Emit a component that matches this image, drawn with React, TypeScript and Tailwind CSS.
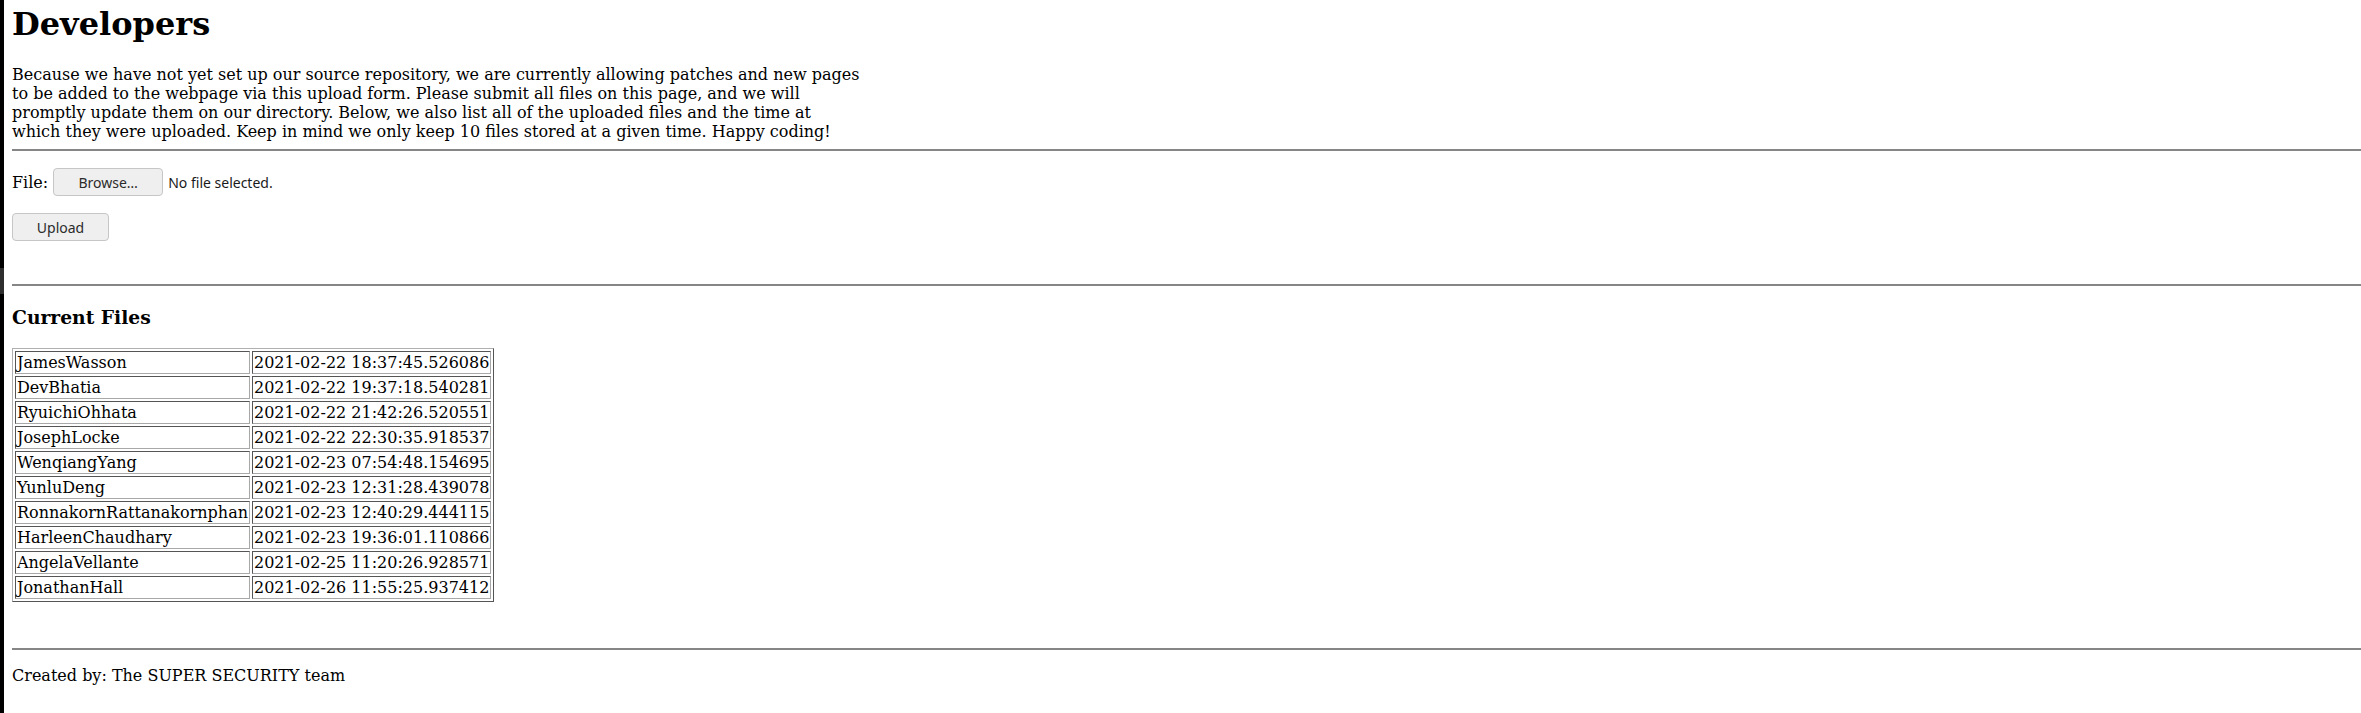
import React from "react";

const rows: [string, string][] = [
  ["JamesWasson", "2021-02-22 18:37:45.526086"],
  ["DevBhatia", "2021-02-22 19:37:18.540281"],
  ["RyuichiOhhata", "2021-02-22 21:42:26.520551"],
  ["JosephLocke", "2021-02-22 22:30:35.918537"],
  ["WenqiangYang", "2021-02-23 07:54:48.154695"],
  ["YunluDeng", "2021-02-23 12:31:28.439078"],
  ["RonnakornRattanakornphan", "2021-02-23 12:40:29.444115"],
  ["HarleenChaudhary", "2021-02-23 19:36:01.110866"],
  ["AngelaVellante", "2021-02-25 11:20:26.928571"],
  ["JonathanHall", "2021-02-26 11:55:25.937412"],
];

const cellCls =
  "border border-t-[#555555] border-l-[#555555] border-b-[#a8a8a8] border-r-[#a8a8a8] p-[1px] whitespace-nowrap leading-[normal]";

export default function App() {
  return (
    <div className="flex min-h-[713px] bg-white text-black font-['DejaVu_Serif',serif] text-[16px]">
      <div className="w-[4px] shrink-0 flex flex-col">
        <div className="h-[268px] bg-black" />
        <div className="h-[26px] bg-[#2e2e2e]" />
        <div className="flex-1 bg-black" />
      </div>
      <div className="flex-1 pl-[8px]">
        <h1 className="text-[32px] font-bold leading-[normal] mt-[5px]">Developers</h1>
        <p className="w-[851px] leading-[normal] mt-[22px]">
          Because we have not yet set up our source repository, we are currently allowing patches and new pages
          to be added to the webpage via this upload form. Please submit all files on this page, and we will
          promptly update them on our directory. Below, we also list all of the uploaded files and the time at
          which they were uploaded. Keep in mind we only keep 10 files stored at a given time. Happy coding!
        </p>
        <hr className="border-0 h-[2px] bg-[#868686] mt-[8px]" />
        <div className="mt-[17px] flex items-center h-[28px]">
          <span className="leading-[normal]">File:</span>
          <button className="ml-[5px] w-[110px] h-[28px] rounded-[4px] border border-[#c6c6c6] bg-[#efefef] text-[#2b2b2b] text-[14px] font-['Noto_Sans',sans-serif]">
            Browse…
          </button>
          <span className="ml-[5px] text-[14px] text-[#1a1a1a] font-['Noto_Sans',sans-serif]">No file selected.</span>
        </div>
        <button className="mt-[17px] block w-[97px] h-[28px] rounded-[4px] border border-[#c6c6c6] bg-[#efefef] text-[#2b2b2b] text-[14px] font-['Noto_Sans',sans-serif]">
          Upload
        </button>
        <hr className="border-0 h-[2px] bg-[#868686] mt-[43px]" />
        <h3 className="text-[18.72px] font-bold leading-[normal] mt-[20px]">Current Files</h3>
        <table className="mt-[20px] border-separate border-spacing-[2px] border border-t-[#b0b0b0] border-l-[#b0b0b0] border-b-[#555555] border-r-[#555555]">
          <tbody>
            {rows.map(([name, time]) => (
              <tr key={name}>
                <td className={cellCls}>{name}</td>
                <td className={cellCls}>{time}</td>
              </tr>
            ))}
          </tbody>
        </table>
        <hr className="border-0 h-[2px] bg-[#868686] mt-[46px]" />
        <p className="mt-[16px] leading-[normal]">Created by: The SUPER SECURITY team</p>
      </div>
    </div>
  );
}
